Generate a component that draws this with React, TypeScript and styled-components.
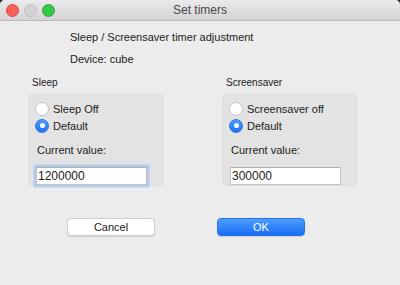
import React from "react";
import styled, { createGlobalStyle } from "styled-components";

const GlobalStyle = createGlobalStyle`
  html, body {
    margin: 0;
    padding: 0;
    background: #2a2a2a;
  }
  body {
    font-family: "Liberation Sans", Arial, sans-serif;
    color: #222;
  }
`;

const Window = styled.div`
  width: 400px;
  height: 285px;
  background: #ececec;
  border-radius: 5px 5px 0 0;
  overflow: hidden;
  display: flex;
  flex-direction: column;
`;

const TitleBar = styled.div`
  height: 20px;
  border-bottom: 1px solid #b9b9b9;
  background: linear-gradient(#ebe9eb, #d5d3d5);
  display: grid;
  grid-template-columns: 1fr auto 1fr;
  align-items: center;
`;

const Lights = styled.div`
  display: flex;
  gap: 5px;
  padding-left: 6px;
`;

const Light = styled.span<{ $fill: string; $edge: string }>`
  width: 11px;
  height: 11px;
  border-radius: 50%;
  background: ${(p) => p.$fill};
  border: 0.5px solid ${(p) => p.$edge};
`;

const Title = styled.div`
  font-size: 12px;
  color: #4a4a4a;
`;

const Body = styled.div`
  padding-top: 9px;
  display: flex;
  flex-direction: column;
`;

const Header = styled.div`
  padding-left: 70px;
  display: flex;
  flex-direction: column;
  gap: 8px;
  font-size: 11px;
  line-height: 14px;
`;

const Groups = styled.div`
  display: flex;
  gap: 58px;
  padding-left: 28px;
  margin-top: 11px;
`;

const Group = styled.div<{ $width: number }>`
  width: ${(p) => p.$width}px;
  display: flex;
  flex-direction: column;
`;

const GroupLabel = styled.div`
  font-size: 10px;
  line-height: 12px;
  padding-left: 4px;
  margin-bottom: 5px;
`;

const Panel = styled.div`
  background: #e3e3e3;
  border: 1px solid #dedede;
  border-radius: 4px;
  padding: 6px 6px 0;
  height: 92px;
  box-sizing: border-box;
  display: flex;
  flex-direction: column;
`;

const RadioRow = styled.label`
  display: flex;
  align-items: center;
  gap: 4px;
  height: 17px;
  font-size: 11px;
`;

const Radio = styled.span<{ $on?: boolean }>`
  width: 14px;
  height: 14px;
  box-sizing: border-box;
  border-radius: 50%;
  display: flex;
  align-items: center;
  justify-content: center;
  background: ${(p) => (p.$on ? "linear-gradient(#4b9bfb, #1f72f2)" : "#fff")};
  border: 1px solid ${(p) => (p.$on ? "#2e78e6" : "#c4c4c4")};
  &::after {
    content: "";
    display: ${(p) => (p.$on ? "block" : "none")};
    width: 5px;
    height: 5px;
    border-radius: 50%;
    background: #fff;
  }
`;

const FieldLabel = styled.div`
  font-size: 11px;
  line-height: 14px;
  margin-top: 9px;
  padding-left: 2px;
`;

const Field = styled.input<{ $focus?: boolean }>`
  margin-top: 10px;
  margin-left: 1px;
  width: 111px;
  height: 18px;
  box-sizing: border-box;
  border: 1px solid #c2c2c2;
  border-top-color: #b0b0b0;
  background: #fff;
  padding: 0 1px;
  font-family: "Liberation Sans", Arial, sans-serif;
  font-size: 12px;
  color: #222;
  outline: none;
  box-shadow: ${(p) => (p.$focus ? "0 0 0 2.5px #b3cbee" : "none")};
`;

const Actions = styled.div`
  display: flex;
  gap: 62px;
  padding-left: 67px;
  margin-top: 32px;
`;

const Button = styled.button<{ $primary?: boolean }>`
  width: 88px;
  height: 18px;
  border-radius: 4px;
  font-family: "Liberation Sans", Arial, sans-serif;
  font-size: 11px;
  padding: 0;
  color: ${(p) => (p.$primary ? "#fff" : "#222")};
  background: ${(p) =>
    p.$primary ? "linear-gradient(#4d9dfd, #1a6ef6)" : "#fff"};
  border: 1px solid ${(p) => (p.$primary ? "#2a72e8" : "#cfcfcf")};
  box-shadow: 0 0.5px 1px rgba(0, 0, 0, 0.12);
`;

type TimerProps = {
  label: string;
  offText: string;
  value: string;
  width: number;
  focus?: boolean;
};

const TimerGroup = ({ label, offText, value, width, focus }: TimerProps) => (
  <Group $width={width}>
    <GroupLabel>{label}</GroupLabel>
    <Panel>
      <RadioRow>
        <Radio />
        {offText}
      </RadioRow>
      <RadioRow>
        <Radio $on />
        Default
      </RadioRow>
      <FieldLabel>Current value:</FieldLabel>
      <Field $focus={focus} defaultValue={value} />
    </Panel>
  </Group>
);

const App = () => {
  return (
    <>
      <GlobalStyle />
      <Window>
        <TitleBar>
          <Lights>
            <Light $fill="#fc605b" $edge="#de4642" />
            <Light $fill="#d3d3d3" $edge="#bdbdbd" />
            <Light $fill="#35c84a" $edge="#26a936" />
          </Lights>
          <Title>Set timers</Title>
          <div />
        </TitleBar>
        <Body>
          <Header>
            <div>Sleep / Screensaver timer adjustment</div>
            <div>Device: cube</div>
          </Header>
          <Groups>
            <TimerGroup label="Sleep" offText="Sleep Off" value="1200000" width={136} focus />
            <TimerGroup label="Screensaver" offText="Screensaver off" value="300000" width={135} />
          </Groups>
          <Actions>
            <Button>Cancel</Button>
            <Button $primary>OK</Button>
          </Actions>
        </Body>
      </Window>
    </>
  );
};

export default App;
